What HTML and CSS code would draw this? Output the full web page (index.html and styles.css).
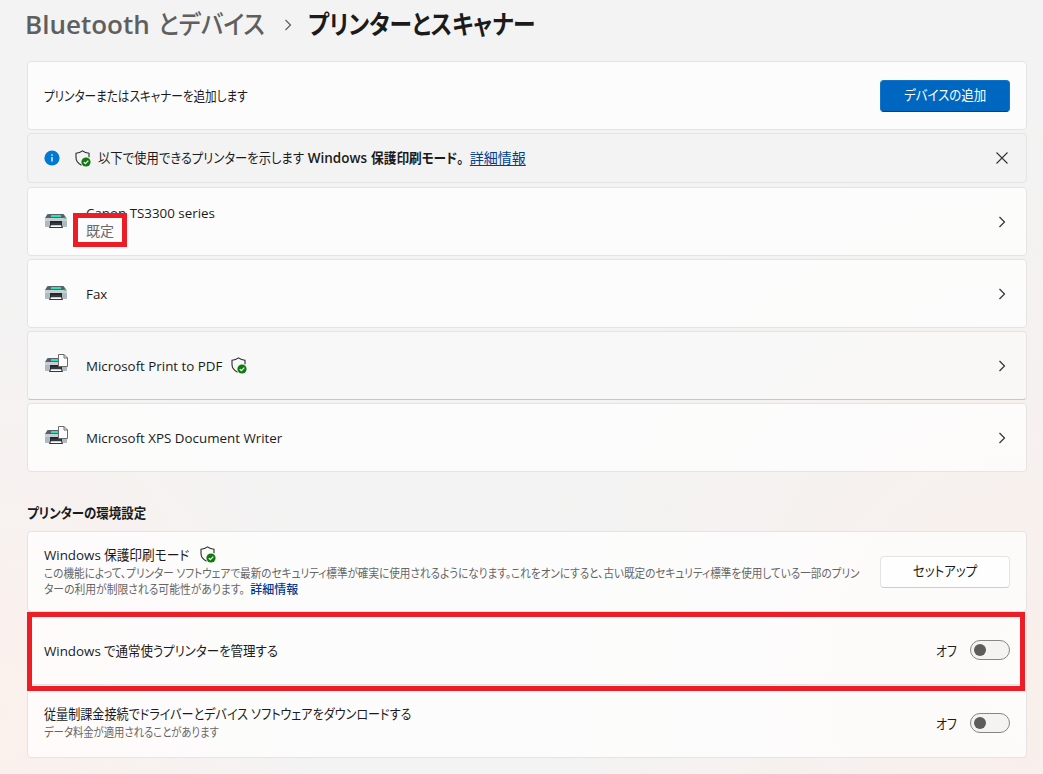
FILE: index.html
```
<!DOCTYPE html>
<html lang="ja">
<head>
    <meta charset="UTF-8">
    <meta name="viewport" content="width=device-width, initial-scale=1.0">
    <title>プリンターとスキャナー</title>
    <link rel="stylesheet" href="styles.css">
</head>
<body>
    <svg class="sprite" width="0" height="0">
        <symbol id="printer" viewBox="0 0 24 25">
            <path d="M3.500 5h16l3 4H1z" fill="#59636c"/>
            <rect x="7" y="6" width="10" height="2" rx=".5" fill="#35e0b0"/>
            <path d="M1 9h22v8q0 1-1 1H2q-1 0-1-1z" fill="#aeb9c4"/>
            <path d="M1 9h22v3H1z" fill="#c6ced6"/>
            <rect x="20" y="8" width="2" height="1.500" fill="#1fd01f"/>
            <path d="M6 12h12v4.500H6z" fill="#25282b"/>
            <path d="M7 14.500h10v1H7z" fill="#4a4f54"/>
            <path d="M6 16h12l1 3H5z" fill="#33373a"/>
            <path d="M7 16.200h10l.6 1.800H6.400z" fill="#fff"/>
        </symbol>
        <symbol id="page" viewBox="0 0 24 25">
            <path d="M14.500 1.500h5.500l3.500 3.500v8.500h-9z" fill="#fdfdfd" stroke="#6b6b6b"/>
            <path d="M20 1.500v3.500h3.500" fill="none" stroke="#6b6b6b"/>
        </symbol>
        <symbol id="shield" viewBox="0 0 16 17">
            <path d="M6.500 15.200C3 13.500 1 11 1 7.600V3.200C3.500 3.100 5.700 2.300 7.500.9c1.800 1.400 4 2.200 6.500 2.300v4" fill="none" stroke="#2b2b2b" stroke-width="1.100"/>
            <circle cx="11" cy="12" r="4.600" fill="#0f7b0f"/>
            <path d="M8.800 12.100l1.600 1.600 2.900-3" fill="none" stroke="#fff" stroke-width="1.200"/>
        </symbol>
        <symbol id="chevron" viewBox="0 0 8 12">
            <path d="M1.500 1l5 5-5 5" fill="none" stroke="currentColor" stroke-width="1.200"/>
        </symbol>
    </svg>

    <h1 class="breadcrumb">
        <span class="crumb parent">Bluetooth <span class="narrow kana-l">とデバイス</span></span>
        <svg class="sep"><use href="#chevron"/></svg>
        <span class="crumb narrow kana-xl">プリンターとスキャナー</span>
    </h1>

    <div class="cards">
        <div class="card">
            <span class="label narrow t-add">プリンターまたはスキャナーを追加します</span>
            <button class="btn primary"><span class="narrow">デバイスの追加</span></button>
        </div>

        <div class="card info">
            <svg class="info-icon" viewBox="0 0 16 16">
                <circle cx="8" cy="8" r="7.600" fill="#0078d4"/>
                <path d="M8 7v4.500M8 4.300v1.400" stroke="#fff" stroke-width="1.300"/>
            </svg>
            <svg class="shield"><use href="#shield"/></svg>
            <span class="info-text"><span class="narrow t-info">以下で使用できるプリンターを示します</span> <b>Windows <span class="narrow t-mode">保護印刷モード。</span></b></span>
            <a class="link" href="#">詳細情報</a>
            <svg class="close" viewBox="0 0 12 12"><path d="M.5.5l11 11M11.500.5l-11 11" stroke="#333" stroke-width="1.100"/></svg>
        </div>

        <div class="card">
            <svg class="device"><use href="#printer"/></svg>
            <div class="stack">
                <span class="label">Canon TS3300 series</span>
                <span class="status">既定</span>
                <div class="mark mark-default"></div>
            </div>
            <svg class="chev"><use href="#chevron"/></svg>
        </div>

        <div class="card">
            <svg class="device"><use href="#printer"/></svg>
            <span class="label">Fax</span>
            <svg class="chev"><use href="#chevron"/></svg>
        </div>

        <div class="card hover">
            <svg class="device"><use href="#printer"/><use href="#page"/></svg>
            <span class="label">Microsoft Print to PDF</span>
            <svg class="shield after"><use href="#shield"/></svg>
            <svg class="chev"><use href="#chevron"/></svg>
        </div>

        <div class="card">
            <svg class="device"><use href="#printer"/><use href="#page"/></svg>
            <span class="label">Microsoft XPS Document Writer</span>
            <svg class="chev"><use href="#chevron"/></svg>
        </div>
    </div>

    <h2 class="section"><span class="narrow">プリンターの環境設定</span></h2>

    <div class="cards">
        <div class="card tall">
            <div class="desc wide">
                <div class="desc-title"><span class="label">Windows <span class="narrow t-mode2">保護印刷モード</span></span><svg class="shield"><use href="#shield"/></svg></div>
                <div class="small"><span class="narrow t-line1">この機能によって、プリンター ソフトウェアで最新のセキュリティ標準が確実に使用されるようになります。これをオンにすると、古い既定のセキュリティ標準を使用している一部のプリン</span><br><span class="narrow t-line2">ターの利用が制限される可能性があります。</span> <a class="link plain" href="#">詳細情報</a></div>
            </div>
            <button class="btn"><span class="narrow">セットアップ</span></button>
        </div>

        <div class="card setting">
            <span class="label">Windows <span class="narrow t-manage">で通常使うプリンターを管理する</span></span>
            <span class="state narrow">オフ</span>
            <span class="toggle"></span>
            <div class="mark mark-row"></div>
        </div>

        <div class="card setting">
            <div class="desc">
                <span class="label narrow t-meter">従量制課金接続でドライバーとデバイス ソフトウェアをダウンロードする</span>
                <div class="small"><span class="narrow t-data">データ料金が適用されることがあります</span></div>
            </div>
            <span class="state narrow">オフ</span>
            <span class="toggle"></span>
        </div>
    </div>
</body>
</html>
```
FILE: styles.css
```
* {
    box-sizing: border-box;
}

body {
    margin: 0;
    height: 774px;
    overflow: hidden;
    padding: 0 16px 0 27px;
    font-family: "Open Sans", "Noto Sans CJK JP", sans-serif;
    font-size: 13.35px;
    font-feature-settings: "palt";
    color: #1b1b1b;
    background:
        radial-gradient(ellipse 330px 420px at 0 92%, #fbf0ec, rgba(251, 240, 236, 0)),
        radial-gradient(ellipse 520px 560px at 100% 88%, #f9efeb, rgba(249, 239, 235, 0)),
        #f3f3f3;
}

.sprite {
    position: absolute;
}

svg {
    flex: none;
}

/* condensed kana, the negative margin takes back the unused width */
.narrow {
    display: inline-block;
    transform: scaleX(0.89);
    transform-origin: 0 50%;
}

.breadcrumb {
    display: flex;
    align-items: center;
    height: 48px;
    margin: 0 0 13px -2px;
    font-size: 26px;
    font-weight: 600;
    line-height: 48px;
    white-space: nowrap;
}

.parent {
    color: #5f5f5f;
}

.kana-l {
    margin-left: 2px;
    margin-right: -12px;
    font-weight: 500;
    transform: scaleX(0.91);
}

.kana-xl {
    transform: scaleX(0.872);
}

.sep {
    width: 8px;
    height: 12px;
    margin: 2px 16px 0 20px;
    color: #5f5f5f;
}

.cards {
    display: flex;
    flex-direction: column;
    gap: 3px;
}

.card {
    position: relative;
    display: flex;
    align-items: center;
    height: 69px;
    padding: 0 16px;
    border: 1px solid #e6e4e3;
    border-radius: 4px;
    background: rgba(255, 255, 255, 0.72);
    white-space: nowrap;
}

.card.info {
    height: 50px;
    margin-bottom: 1px;
    background: rgba(243, 243, 243, 0.6);
}

.card.hover {
    background: rgba(250, 250, 249, 0.75);
    border-bottom-color: #c9c7c6;
}

.card.tall {
    height: 81px;
}

.card.setting {
    height: 70px;
}

.t-add {
    margin-bottom: 2px;
    font-size: 13.5px;
    transform: scaleX(0.86);
}

.btn {
    flex: none;
    width: 130px;
    height: 32px;
    margin-left: auto;
    padding: 0 0 3px;
    border: 1px solid #e6e4e3;
    border-bottom-color: #cfcdcc;
    border-radius: 4px;
    background: #fefefe;
    color: #1b1b1b;
    font: inherit;
    font-size: 14px;
}

.btn .narrow {
    transform-origin: 50% 50%;
}

.btn.primary {
    background: #0067c0;
    border-color: #1473c5;
    border-bottom-color: #00437d;
    color: #fff;
}

.info-icon {
    width: 16px;
    height: 16px;
    margin-right: 15px;
}

.shield {
    width: 16px;
    height: 17px;
}

.shield.after {
    margin-left: 9px;
}

.info-text {
    margin: 0 0 2px 7px;
    font-size: 13.5px;
}

.info-text b {
    font-weight: 600;
}

.t-info {
    margin-right: -19px;
    transform: scaleX(0.915);
}

.t-mode {
    margin-right: -6px;
    transform: scaleX(0.94);
}

.link {
    margin: 0 0 2px 7px;
    color: #003e92;
    font-size: 14px;
    text-underline-offset: 2px;
}

.link.plain {
    margin: 0 0 0 1px;
    font-size: 12px;
    font-weight: 500;
    text-decoration: none;
}

.close {
    width: 12px;
    height: 12px;
    margin-left: auto;
    margin-right: 2px;
}

.device {
    width: 24px;
    height: 25px;
    margin-right: 18px;
}

.chev {
    width: 8px;
    height: 12px;
    margin-left: auto;
    margin-right: 4px;
    color: #333;
}

.stack {
    position: relative;
    display: flex;
    flex-direction: column;
    line-height: 18px;
}

.status {
    color: #6a6a6a;
    font-size: 14px;
}

/* red callouts drawn over the rows */
.mark {
    position: absolute;
    z-index: 1;
    border: 5px solid #ee1c25;
}

.mark-default {
    left: -13px;
    top: 9px;
    width: 54px;
    height: 34px;
}

.mark-row {
    left: -1px;
    top: -4px;
    width: 998px;
    height: 79px;
}

.section {
    height: 20px;
    margin: 31px 0 8px;
    font-size: 14px;
    font-weight: 600;
    line-height: 20px;
}

.desc.wide {
    width: 830px;
}

.desc-title {
    display: flex;
    align-items: center;
    gap: 11px;
    height: 18px;
}

.desc .label {
    line-height: 18px;
}

.t-mode2 {
    margin-right: -5px;
    transform: scaleX(0.95);
}

.small {
    margin-top: 2px;
    color: #666;
    font-size: 12px;
    line-height: 16px;
}

.t-line1 {
    transform: scaleX(0.883);
}

.t-line2 {
    margin-right: -21px;
    transform: scaleX(0.9);
}

.t-manage {
    transform: scaleX(0.935);
}

.t-meter {
    font-size: 13.5px;
    transform: scaleX(0.895);
}

.t-data {
    transform: scaleX(0.862);
}

.state {
    margin: 0 9px 0 auto;
    font-size: 14px;
    transform: scaleX(0.85);
}

.toggle {
    width: 40px;
    height: 20px;
    padding: 3px;
    border: 1px solid #868686;
    border-radius: 10px;
    background: #f4f3f2;
}

.toggle::before {
    content: "";
    display: block;
    width: 12px;
    height: 12px;
    border-radius: 50%;
    background: #5c5c5c;
}
```
